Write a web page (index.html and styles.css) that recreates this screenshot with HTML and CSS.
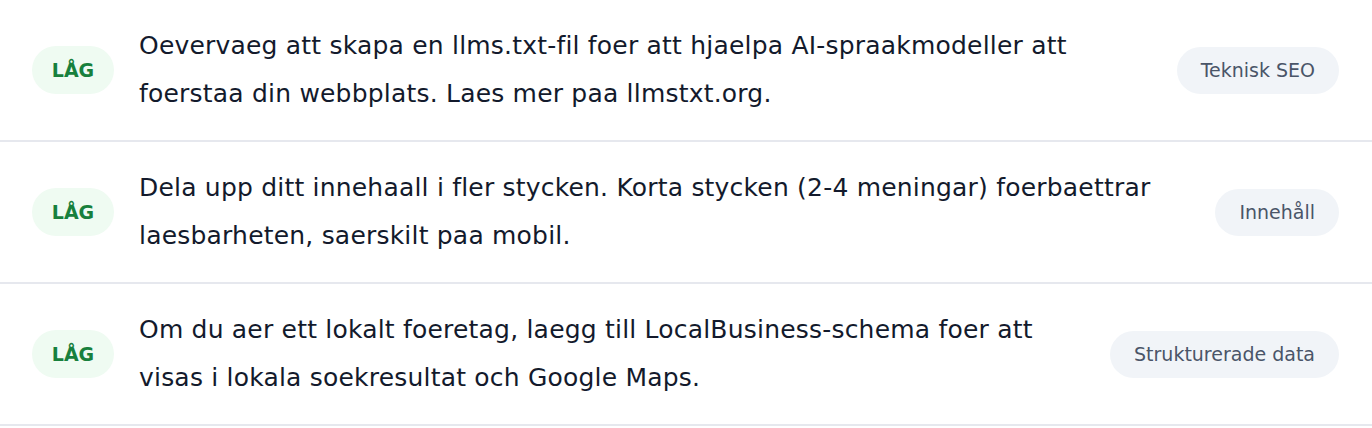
FILE: index.html
```html
<!DOCTYPE html>
<html lang="sv">
<head>
    <meta charset="UTF-8">
    <meta name="viewport" content="width=device-width, initial-scale=1.0">
    <title>Rekommendationer</title>
    <link rel="stylesheet" href="styles.css">
</head>
<body>
    <ul class="tips">
        <li class="tip">
            <span class="prio">LÅG</span>
            <p class="tip-text">Oevervaeg att skapa en llms.txt-fil foer att hjaelpa AI-spraakmodeller att foerstaa din webbplats. Laes mer paa llmstxt.org.</p>
            <span class="tag">Teknisk SEO</span>
        </li>
        <li class="tip">
            <span class="prio">LÅG</span>
            <p class="tip-text">Dela upp ditt innehaall i fler stycken. Korta stycken (2-4 meningar) foerbaettrar laesbarheten, saerskilt paa mobil.</p>
            <span class="tag">Innehåll</span>
        </li>
        <li class="tip">
            <span class="prio">LÅG</span>
            <p class="tip-text">Om du aer ett lokalt foeretag, laegg till LocalBusiness-schema foer att visas i lokala soekresultat och Google Maps.</p>
            <span class="tag">Strukturerade data</span>
        </li>
    </ul>
</body>
</html>
```

FILE: styles.css
```css
:root {
    --text-color: #131a2c;
    --border-color: #e6e8ee;
    --low-bg: #effbf2;
    --low-text: #17803d;
    --tag-bg: #f1f4f8;
    --tag-text: #4a5568;
}

body {
    margin: 0;
    background: #ffffff;
    font-family: 'DejaVu Sans', sans-serif;
    color: var(--text-color);
}

.tips {
    list-style: none;
    margin: 0;
    padding: 0;
}

.tip {
    display: flex;
    align-items: center;
    gap: 24px;
    padding: 22px 33px 22px 32px;
    border-bottom: 2px solid var(--border-color);
}

.prio {
    flex-shrink: 0;
    width: 82px;
    height: 48px;
    line-height: 48px;
    text-align: center;
    border-radius: 24px;
    background: var(--low-bg);
    color: var(--low-text);
    font-weight: 700;
    font-size: 19px;
    margin-right: 1px;
}

.tip-text {
    flex: 1;
    margin: 0;
    font-size: 25px;
    letter-spacing: 0.2px;
    line-height: 48px;
}

.tag {
    flex-shrink: 0;
    padding: 0 24px;
    height: 47px;
    line-height: 47px;
    border-radius: 24px;
    background: var(--tag-bg);
    color: var(--tag-text);
    font-size: 19px;
}
```
